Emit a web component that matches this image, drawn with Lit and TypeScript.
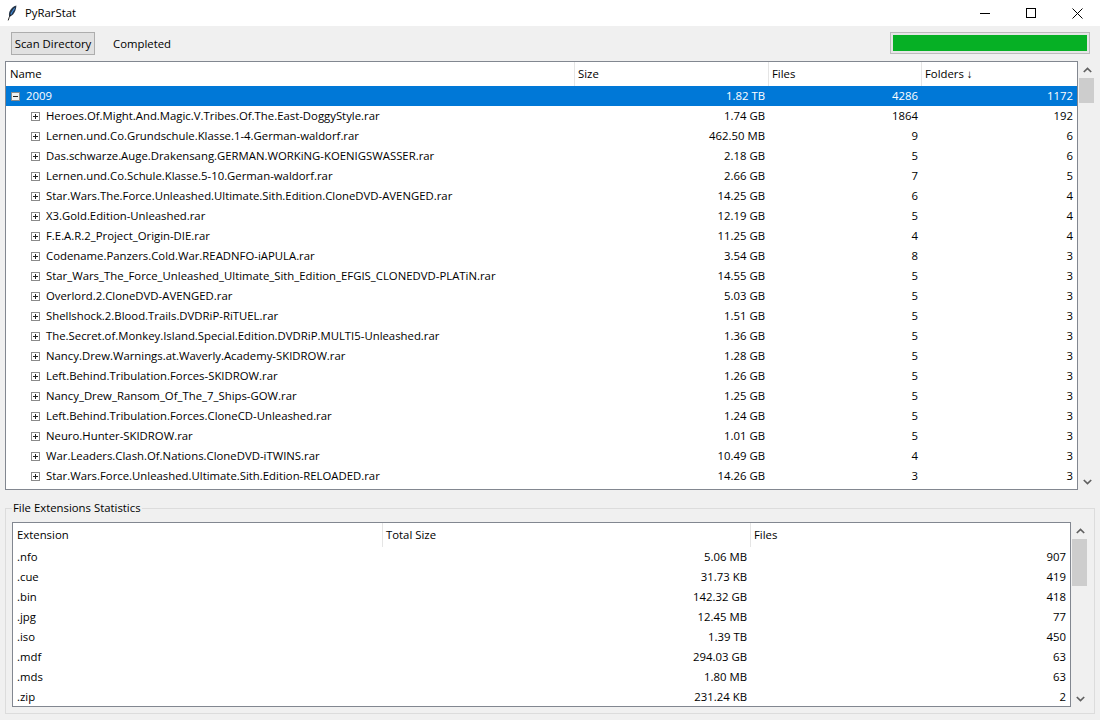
import { LitElement, html, css, svg } from "lit";
import { customElement } from "lit/decorators.js";

const main: [string, string, string, string][] = [
  ["Heroes.Of.Might.And.Magic.V.Tribes.Of.The.East-DoggyStyle.rar", "1.74 GB", "1864", "192"],
  ["Lernen.und.Co.Grundschule.Klasse.1-4.German-waldorf.rar", "462.50 MB", "9", "6"],
  ["Das.schwarze.Auge.Drakensang.GERMAN.WORKiNG-KOENIGSWASSER.rar", "2.18 GB", "5", "6"],
  ["Lernen.und.Co.Schule.Klasse.5-10.German-waldorf.rar", "2.66 GB", "7", "5"],
  ["Star.Wars.The.Force.Unleashed.Ultimate.Sith.Edition.CloneDVD-AVENGED.rar", "14.25 GB", "6", "4"],
  ["X3.Gold.Edition-Unleashed.rar", "12.19 GB", "5", "4"],
  ["F.E.A.R.2_Project_Origin-DIE.rar", "11.25 GB", "4", "4"],
  ["Codename.Panzers.Cold.War.READNFO-iAPULA.rar", "3.54 GB", "8", "3"],
  ["Star_Wars_The_Force_Unleashed_Ultimate_Sith_Edition_EFGIS_CLONEDVD-PLATiN.rar", "14.55 GB", "5", "3"],
  ["Overlord.2.CloneDVD-AVENGED.rar", "5.03 GB", "5", "3"],
  ["Shellshock.2.Blood.Trails.DVDRiP-RiTUEL.rar", "1.51 GB", "5", "3"],
  ["The.Secret.of.Monkey.Island.Special.Edition.DVDRiP.MULTI5-Unleashed.rar", "1.36 GB", "5", "3"],
  ["Nancy.Drew.Warnings.at.Waverly.Academy-SKIDROW.rar", "1.28 GB", "5", "3"],
  ["Left.Behind.Tribulation.Forces-SKIDROW.rar", "1.26 GB", "5", "3"],
  ["Nancy_Drew_Ransom_Of_The_7_Ships-GOW.rar", "1.25 GB", "5", "3"],
  ["Left.Behind.Tribulation.Forces.CloneCD-Unleashed.rar", "1.24 GB", "5", "3"],
  ["Neuro.Hunter-SKIDROW.rar", "1.01 GB", "5", "3"],
  ["War.Leaders.Clash.Of.Nations.CloneDVD-iTWINS.rar", "10.49 GB", "4", "3"],
  ["Star.Wars.Force.Unleashed.Ultimate.Sith.Edition-RELOADED.rar", "14.26 GB", "3", "3"],
];

const exts: [string, string, string][] = [
  [".nfo", "5.06 MB", "907"],
  [".cue", "31.73 KB", "419"],
  [".bin", "142.32 GB", "418"],
  [".jpg", "12.45 MB", "77"],
  [".iso", "1.39 TB", "450"],
  [".mdf", "294.03 GB", "63"],
  [".mds", "1.80 MB", "63"],
  [".zip", "231.24 KB", "2"],
];

const chevron = (up: boolean) => html`<svg class="chev" width="9" height="6" viewBox="0 0 9 6">
  <path d=${up ? "M.8 5 4.5 1.4 8.2 5" : "M.8 1 4.5 4.6 8.2 1"} fill="none" stroke="#606060" stroke-width="1.7"/></svg>`;

const expander = (open: boolean) => html`<svg class="exp" width="9" height="9" viewBox="0 0 9 9" shape-rendering="crispEdges">
  <rect x=".5" y=".5" width="8" height="8" fill=${open ? "#f0f0f0" : "#fff"} stroke="#8a8a8a"/>
  <path d="M2 4.5h5" stroke="#222"/>
  ${open ? "" : svg`<path d="M4.5 2v5" stroke="#222"/>`}
</svg>`;

@customElement("app-root")
export class AppRoot extends LitElement {
  static styles = css`
    :host {
      display: flex;
      flex-direction: column;
      width: 1100px;
      height: 720px;
      background: #f0f0f0;
      font-family: "Open Sans", "Noto Sans", sans-serif;
      font-size: 11.35px;
      color: #000;
      overflow: hidden;
    }
    .title {
      height: 26px;
      background: #fff;
      display: flex;
      align-items: center;
      flex: none;
    }
    .feather { margin-left: 7px; flex: none; }
    .title-text { margin-left: 8px; padding-bottom: 2px; flex: 1; }
    .win { width: 46px; height: 26px; display: flex; align-items: center; justify-content: center; }
    .toolbar {
      height: 35px;
      box-sizing: border-box;
      flex: none;
      display: flex;
      align-items: center;
      padding: 0 10px 1px 11px;
    }
    .btn {
      width: 84px; height: 23px; box-sizing: border-box;
      background: #e1e1e1; border: 1px solid #adadad;
      display: flex; align-items: center; justify-content: center;
    }
    .status { margin-left: 18px; flex: 1; }
    .progress {
      width: 200px; height: 22px; box-sizing: border-box;
      background: #e6e6e6; border: 1px solid #bcbcbc; padding: 2px;
    }
    .progress div { height: 100%; background: #06b025; }
    .tv-wrap { display: flex; margin-left: 5px; margin-right: 4px; }
    .tv {
      flex: 1; min-width: 0;
      background: #fff;
      border: 1px solid #828790;
      overflow: hidden;
    }
    .main { height: 429px; box-sizing: border-box; }
    .ext { height: 185px; box-sizing: border-box; }
    .row, .head {
      display: grid;
      align-items: center;
      height: 20px;
    }
    .main .row, .main .head { grid-template-columns: 568px 194px 153px 1fr; }
    .ext .row, .ext .head { grid-template-columns: 369px 368px 1fr; }
    .head { height: 24px; }
    .head > div { padding: 0 0 2px 3px; height: 100%; display: flex; align-items: center; box-sizing: border-box; border-left: 1px solid #e5e5e5; }
    .head > div:first-child { border-left: 0; padding-left: 4px; }
    .row > div { padding: 0 3px 2px 4px; white-space: nowrap; }
    .row > div:last-child { padding-right: 4px; }
    .row > .r { text-align: right; }
    .row.sel { background: #0078d7; color: #fff; }
    .name { display: flex; align-items: center; }
    .exp { flex: none; position: relative; top: 1px; }
    .sel .exp { margin-left: 1px; margin-right: 6px; }
    .child .exp { margin-left: 21px; margin-right: 6px; }
    .sb {
      width: 18px; flex: none; display: flex; flex-direction: column; align-items: center;
    }
    .arrow { height: 17px; display: flex; align-items: center; justify-content: center; flex: none; width: 100%; }
    .track { flex: 1; width: 100%; }
    .thumb { width: 15px; margin-left: 1px; background: #cdcdcd; }
    .main-sb .thumb { height: 25px; }
    .ext-sb .thumb { height: 47px; }
    .group {
      position: relative;
      margin: 18px 5px 0 5px;
      height: 206px;
      box-sizing: border-box;
      border: 1px solid #dcdcdc;
      padding: 13px 5px 0 6px;
    }
    .legend {
      position: absolute; left: 6px; top: -9px; padding: 0 1px; background: #f0f0f0; line-height: 15px;
    }
    .group .tv-wrap { margin: 0; }
  `;

  private sb(cls: string) {
    return html`<div class="sb ${cls}">
      <div class="arrow">${chevron(true)}</div>
      <div class="track"><div class="thumb"></div></div>
      <div class="arrow">${chevron(false)}</div>
    </div>`;
  }

  render() {
    return html`
      <div class="title">
        <svg class="feather" width="10" height="16" viewBox="0 0 10 16">
          <path d="M9.4.4C6.4 1 3.4 3.6 2.4 6.8 1.8 8.8 1.8 10.6 2.4 11.8 5.2 11 7.4 8.6 8.4 5.6 9 3.8 9.4 2 9.4.4Z" fill="#26364a"/>
          <path d="M7.6 3.2C6 5.4 4.6 7.4 3.8 9.6" fill="none" stroke="#3f8fe0" stroke-width="1.1"/>
          <path d="M3.8 9.6 2.2 12.4 1.2 15.4" fill="none" stroke="#111" stroke-width=".9"/>
        </svg>
        <div class="title-text">PyRarStat</div>
        <div class="win"><svg width="11" height="11" viewBox="0 0 11 11" shape-rendering="crispEdges"><path d="M0 5.5h10" stroke="#000"/></svg></div>
        <div class="win"><svg width="10" height="10" viewBox="0 0 10 10" shape-rendering="crispEdges"><rect x=".5" y=".5" width="9" height="9" fill="none" stroke="#000"/></svg></div>
        <div class="win"><svg width="11" height="11" viewBox="0 0 11 11"><path d="M.5.5l10 10M10.5.5l-10 10" stroke="#000" fill="none"/></svg></div>
      </div>
      <div class="toolbar">
        <div class="btn">Scan Directory</div>
        <div class="status">Completed</div>
        <div class="progress"><div></div></div>
      </div>
      <div class="tv-wrap">
        <div class="tv main">
          <div class="head"><div>Name</div><div>Size</div><div>Files</div><div>Folders ↓</div></div>
          <div class="row sel"><div class="name">${expander(true)}2009</div><div class="r">1.82 TB</div><div class="r">4286</div><div class="r">1172</div></div>
          ${main.map((r) => html`<div class="row child"><div class="name">${expander(false)}${r[0]}</div><div class="r">${r[1]}</div><div class="r">${r[2]}</div><div class="r">${r[3]}</div></div>`)}
        </div>
        ${this.sb("main-sb")}
      </div>
      <div class="group">
        <div class="legend">File Extensions Statistics</div>
        <div class="tv-wrap">
          <div class="tv ext">
            <div class="head"><div>Extension</div><div>Total Size</div><div>Files</div></div>
            ${exts.map((r) => html`<div class="row"><div>${r[0]}</div><div class="r">${r[1]}</div><div class="r">${r[2]}</div></div>`)}
          </div>
          ${this.sb("ext-sb")}
        </div>
      </div>
    `;
  }
}
